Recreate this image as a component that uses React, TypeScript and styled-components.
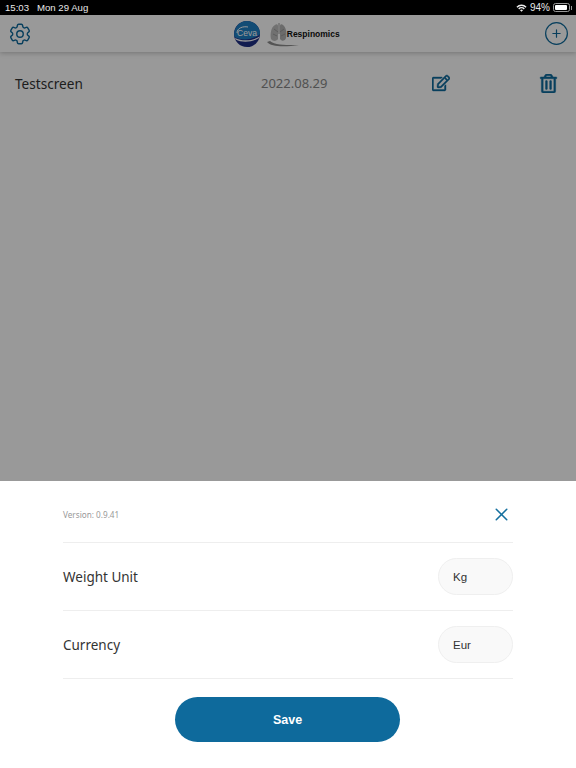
import React from "react";
import styled, { createGlobalStyle } from "styled-components";
import { HiOutlineCog6Tooth, HiOutlinePlusCircle } from "react-icons/hi2";
import { FaRegEdit, FaRegTrashAlt } from "react-icons/fa";
import { X } from "lucide-react";

const GlobalStyle = createGlobalStyle`
    html, body {
        margin: 0;
        padding: 0;
        background: #fff;
    }
    * {
        box-sizing: border-box;
    }
`;

const App = () => {
    return (
        <Page>
            <GlobalStyle />
            <StatusBar>
                <StatusGroup>
                    <span>15:03</span>
                    <span>Mon 29 Aug</span>
                </StatusGroup>
                <BatteryGroup>
                    <svg width="11" height="8" viewBox="0 0 12 9">
                        <path d="M0.3 3 A8 8 0 0 1 11.7 3 L10.6 4.1 A6.4 6.4 0 0 0 1.4 4.1 Z" fill="#eee" />
                        <path d="M2.3 5 A5.2 5.2 0 0 1 9.7 5 L8.6 6.1 A3.6 3.6 0 0 0 3.4 6.1 Z" fill="#eee" />
                        <path d="M4.3 7 A2.4 2.4 0 0 1 7.7 7 L6 8.8 Z" fill="#eee" />
                    </svg>
                    <span>94%</span>
                    <Battery>
                        <BatteryFill />
                    </Battery>
                </BatteryGroup>
            </StatusBar>
            <Screen>
                <Header>
                    <HiOutlineCog6Tooth size={26} color="#0e6a9c" strokeWidth={1.3} />
                    <Logos>
                        <svg width="26" height="26" viewBox="0 0 26 26">
                            <circle cx="13" cy="13" r="13" fill="#1f2f86" />
                            <path d="M13 0 A13 13 0 0 1 26 13 C20 19 7 20 0.5 16 A13 13 0 0 1 13 0 Z" fill="#1f7fc4" />
                            <path d="M1 17 C8 20.5 19 20 25.5 15.5 L25 17 C18 21.5 8 22 1.6 18.6 Z" fill="#fff" />
                            <path d="M3 12 C3 7 9 5 14 6" stroke="#fff" strokeWidth="1" fill="none" />
                            <text x="13" y="15" textAnchor="middle" fill="#fff" fontFamily="Liberation Sans" fontSize="8.5">Ceva</text>
                        </svg>
                        <Lungs width="36" height="30" viewBox="0 0 36 30">
                            <path d="M2 23 C6 28 20 28 34 26 C24 26 10 26.5 5 22 Z" fill="#8c8c8c" />
                            <path d="M10 6 C6 8 5 15 6 20 C8 23 12 22 13 20 L13 7 C13 5 11 5 10 6 Z" fill="#bdbdbd" />
                            <path d="M18 6 C21 8 22 14 21 19 C20 22 17 23 15 20 L15 7 C15 5 17 5 18 6 Z" fill="#b2b2b2" />
                            <path d="M14 4 L14 15 M9 10 L13 13 M19 10 L15 13 M8 15 L12 17 M20 15 L16 17" stroke="#9a9a9a" strokeWidth="1" fill="none" />
                        </Lungs>
                        <BrandText>Respinomics</BrandText>
                    </Logos>
                    <HiOutlinePlusCircle size={29} color="#0e6a9c" strokeWidth={1} />
                </Header>
                <Row>
                    <RowName>Testscreen</RowName>
                    <RowDate>2022.08.29</RowDate>
                    <RowAction>
                        <FaRegEdit size={18} color="#0e6a9c" strokeWidth={12} />
                    </RowAction>
                    <RowAction>
                        <FaRegTrashAlt size={19} color="#0e6a9c" strokeWidth={12} />
                    </RowAction>
                </Row>
                <Dim />
            </Screen>
            <Sheet>
                <SheetTop>
                    <Version>Version: 0.9.41</Version>
                    <X size={21} color="#146f9f" strokeWidth={1.8} />
                </SheetTop>
                <SettingRow>
                    <SettingLabel>Weight Unit</SettingLabel>
                    <Pill>Kg</Pill>
                </SettingRow>
                <SettingRow>
                    <SettingLabel>Currency</SettingLabel>
                    <Pill>Eur</Pill>
                </SettingRow>
                <SaveButton>Save</SaveButton>
            </Sheet>
        </Page>
    );
};

const Page = styled.div`
    display: flex;
    flex-direction: column;
    width: 576px;
    height: 768px;
    overflow: hidden;
    font-family: "Noto Sans", sans-serif;
`;

const StatusBar = styled.div`
    display: flex;
    justify-content: space-between;
    align-items: center;
    height: 15px;
    padding: 0 6px 0 5px;
    background: #000;
    color: #e8e8e8;
    font-family: "Liberation Sans", sans-serif;
    font-size: 9.6px;
`;

const StatusGroup = styled.div`
    display: flex;
    gap: 8px;
`;

const BatteryGroup = styled.div`
    display: flex;
    align-items: center;
    gap: 3px;
    font-size: 10px;
`;

const Battery = styled.div`
    position: relative;
    width: 17px;
    height: 9px;
    padding: 1px;
    border: 1px solid #999;
    border-radius: 2.5px;

    &::after {
        content: "";
        position: absolute;
        top: 1.5px;
        right: -3px;
        width: 1.5px;
        height: 4px;
        background: #999;
    }
`;

const BatteryFill = styled.div`
    width: 94%;
    height: 100%;
    border-radius: 1px;
    background: #fff;
`;

const Screen = styled.div`
    position: relative;
    flex: 1;
    background: #fff;
`;

const Dim = styled.div`
    position: absolute;
    inset: 0;
    background: rgba(0, 0, 0, 0.4);
`;

const Header = styled.header`
    display: flex;
    justify-content: space-between;
    align-items: center;
    height: 37px;
    padding: 0 5.5px 0 7px;
    background: #fff;
    box-shadow: 0 1px 5px rgba(0, 0, 0, 0.25);
`;

const Logos = styled.div`
    display: flex;
    align-items: center;
`;

const Lungs = styled.svg`
    margin-left: 5px;
`;

const BrandText = styled.span`
    width: 54px;
    margin-left: -14px;
    color: #111;
    font-family: "Liberation Sans", sans-serif;
    font-size: 8.5px;
    font-weight: 700;
    white-space: nowrap;
`;

const Row = styled.div`
    display: flex;
    align-items: center;
    height: 28px;
    margin-top: 17px;
    padding-left: 15px;
`;

const RowName = styled.span`
    width: 246px;
    color: #333;
    font-size: 13.6px;
`;

const RowDate = styled.span`
    width: 162px;
    color: #888;
    font-size: 13px;
`;

const RowAction = styled.span`
    display: flex;
    justify-content: center;
    width: 36px;

    & + & {
        margin-left: 71px;
    }
`;

const Sheet = styled.section`
    display: flex;
    flex-direction: column;
    height: 287px;
    padding: 0 63px;
    background: #fff;
`;

const SheetTop = styled.div`
    display: flex;
    justify-content: space-between;
    align-items: center;
    height: 62px;
    padding: 6px 1.5px 0 0;
    border-bottom: 1px solid #eee;
`;

const Version = styled.span`
    color: #999;
    font-size: 8.2px;
`;

const SettingRow = styled.div`
    display: flex;
    justify-content: space-between;
    align-items: center;
    height: 68px;
    border-bottom: 1px solid #eee;
`;

const SettingLabel = styled.span`
    color: #333;
    font-size: 13.5px;
`;

const Pill = styled.div`
    display: flex;
    align-items: center;
    width: 75px;
    height: 37px;
    padding-left: 14px;
    border: 1px solid #efefef;
    border-radius: 19px;
    background: #f9f9f9;
    color: #333;
    font-family: "Liberation Sans", sans-serif;
    font-size: 11.5px;
`;

const SaveButton = styled.button`
    align-self: center;
    width: 225px;
    height: 45px;
    margin-top: 18px;
    margin-right: 1px;
    border: none;
    border-radius: 23px;
    background: #0e6a9c;
    color: #fff;
    font-family: "Liberation Sans", sans-serif;
    font-size: 12.5px;
    font-weight: 700;
`;

export default App;
